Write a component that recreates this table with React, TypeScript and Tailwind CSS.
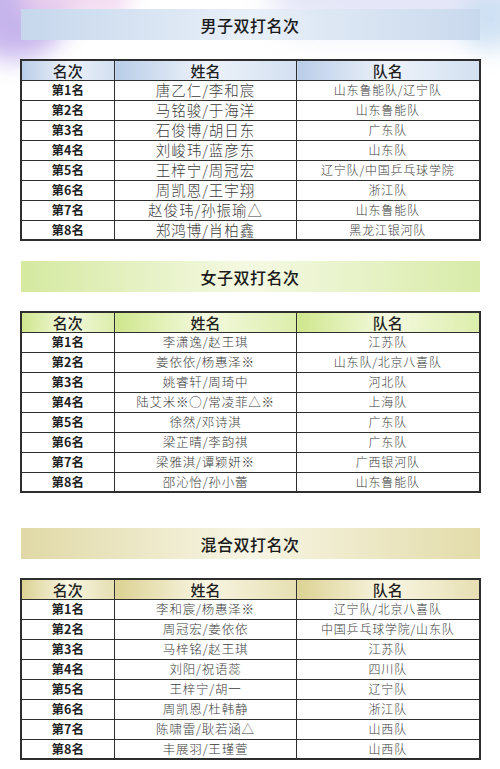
import React from 'react'

type Row = { name: string; team: string }

type Section = {
  title: string
  banner: string
  head: string
  nameSize: string
  rows: Row[]
}

const sections: Section[] = [
  {
    title: '男子双打名次',
    banner: 'bg-gradient-to-r from-[#c6d7ec] via-[#e8eff8] to-[#c9d9ed]',
    head: 'bg-gradient-to-r from-[#b9cde8] via-[#edf2f9] to-[#d3e0f1]',
    nameSize: 'text-[14.5px] tracking-[1px]',
    rows: [
      { name: '唐乙仁/李和宸', team: '山东鲁能队/辽宁队' },
      { name: '马铭骏/于海洋', team: '山东鲁能队' },
      { name: '石俊博/胡日东', team: '广东队' },
      { name: '刘峻玮/蓝彦东', team: '山东队' },
      { name: '王梓宁/周冠宏', team: '辽宁队/中国乒乓球学院' },
      { name: '周凯恩/王宇翔', team: '浙江队' },
      { name: '赵俊玮/孙振瑜△', team: '山东鲁能队' },
      { name: '郑鸿博/肖柏鑫', team: '黑龙江银河队' },
    ],
  },
  {
    title: '女子双打名次',
    banner: 'bg-gradient-to-r from-[#d5e9a0] via-[#f5f9e3] to-[#d8eba8]',
    head: 'bg-gradient-to-r from-[#cfe68c] via-[#f4f9de] to-[#dcedaa]',
    nameSize: 'text-[12.5px] tracking-[0.8px]',
    rows: [
      { name: '李潇逸/赵王琪', team: '江苏队' },
      { name: '姜依依/杨惠泽※', team: '山东队/北京八喜队' },
      { name: '姚睿轩/周琦中', team: '河北队' },
      { name: '陆艾米※○/常凌菲△※', team: '上海队' },
      { name: '徐然/邓诗淇', team: '广东队' },
      { name: '梁芷晴/李韵祺', team: '广东队' },
      { name: '梁雅淇/谭颖妍※', team: '广西银河队' },
      { name: '邵沁怡/孙小蕾', team: '山东鲁能队' },
    ],
  },
  {
    title: '混合双打名次',
    banner: 'bg-gradient-to-r from-[#e0d9a6] via-[#f7f5e4] to-[#e3dcaa]',
    head: 'bg-gradient-to-r from-[#dcd293] via-[#f8f5e2] to-[#e6dfb2]',
    nameSize: 'text-[12.5px] tracking-[0.8px]',
    rows: [
      { name: '李和宸/杨惠泽※', team: '辽宁队/北京八喜队' },
      { name: '周冠宏/姜依依', team: '中国乒乓球学院/山东队' },
      { name: '马梓铭/赵王琪', team: '江苏队' },
      { name: '刘阳/祝语蕊', team: '四川队' },
      { name: '王梓宁/胡一', team: '辽宁队' },
      { name: '周凯恩/杜韩静', team: '浙江队' },
      { name: '陈啸雷/耿若涵△', team: '山西队' },
      { name: '丰展羽/王瑾萱', team: '山西队' },
    ],
  },
]

function RankTable({ s }: { s: Section }) {
  const cell = 'border border-[#2e2e2e] p-0 text-center leading-none'
  return (
    <table className="w-[459px] table-fixed border-collapse border-2 border-[#2e2e2e]">
      <colgroup>
        <col className="w-[94px]" />
        <col className="w-[182px]" />
        <col className="w-[183px]" />
      </colgroup>
      <thead>
        <tr className="h-[20px]">
          {['名次', '姓名', '队名'].map(h => (
            <th key={h} className={`${cell} ${s.head} text-[15px] font-medium text-[#1f1f1f]`}>{h}</th>
          ))}
        </tr>
      </thead>
      <tbody>
        {s.rows.map((r, i) => (
          <tr key={i} className="h-[20px] bg-white">
            <td className={`${cell} text-[12.5px] font-bold text-[#222]`}>第{i + 1}名</td>
            <td className={`${cell} ${s.nameSize} font-light text-[#3c3c3c]`}>{r.name}</td>
            <td className={`${cell} text-[12px] tracking-[0.8px] font-light text-[#3c3c3c]`}>{r.team}</td>
          </tr>
        ))}
      </tbody>
    </table>
  )
}

export default function App() {
  return (
    <div
      className="relative w-[500px] h-[769px] overflow-hidden bg-white"
      style={{ fontFamily: '"Noto Sans CJK SC", "Noto Sans", sans-serif' }}
    >
      {/* background swirls, top corners */}
      <div className="absolute -left-[40px] -top-[50px] w-[110px] h-[110px] rounded-full bg-[#b9a2e8] opacity-80 blur-[12px]" />
      <div className="absolute left-[20px] -top-[30px] w-[110px] h-[50px] rounded-full bg-[#f0d3ee] opacity-80 blur-[10px]" />
      <div className="absolute right-[-30px] -top-[40px] w-[260px] h-[70px] rounded-full bg-[#d9dcf4] opacity-70 blur-[16px]" />
      <div className="absolute right-[-20px] top-[-10px] w-[60px] h-[60px] rounded-full bg-[#c7def2] opacity-80 blur-[12px]" />

      <div className="relative flex flex-col items-center pt-[9px]">
        {sections.map((s, idx) => (
          <div
            key={s.title}
            className={`flex flex-col items-center ${idx === 1 ? 'mt-[20px]' : ''} ${idx === 2 ? 'mt-[35px]' : ''}`}
          >
            <div className={`w-[459px] h-[31px] flex items-center justify-center ${s.banner}`}>
              <span className="text-[16px] font-medium text-[#1a1a1a] tracking-[0.5px]">{s.title}</span>
            </div>
            <div className="mt-[19px]">
              <RankTable s={s} />
            </div>
          </div>
        ))}
      </div>
    </div>
  )
}
